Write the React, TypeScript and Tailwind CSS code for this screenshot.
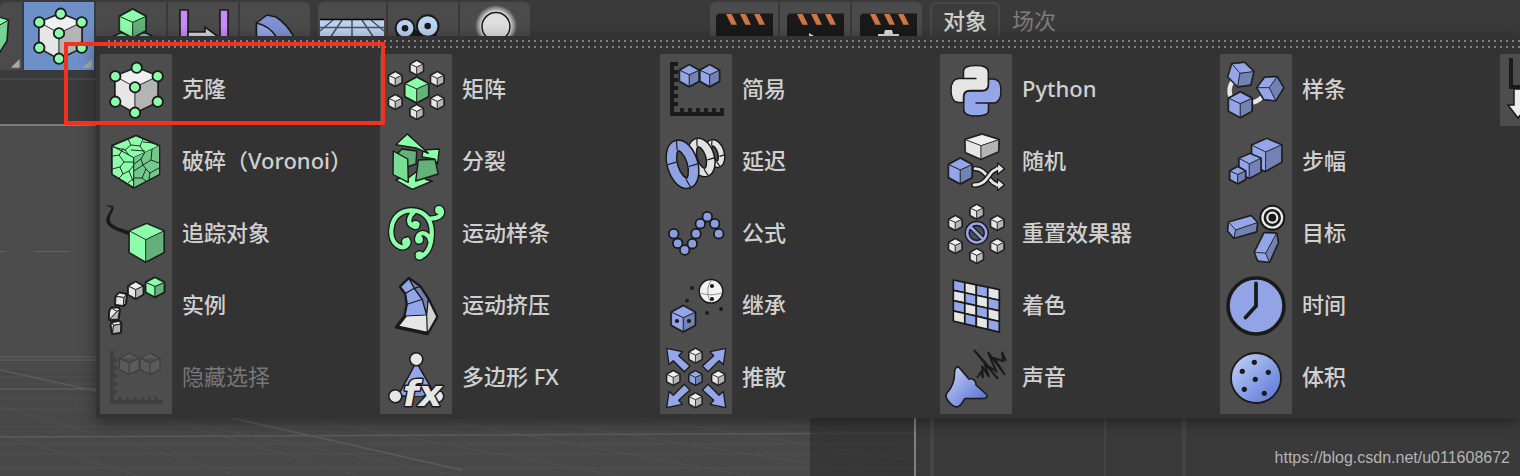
import type { ReactNode } from "react";
import { clsx } from "clsx";

type Point = [number, number];
type Tone = "white" | "green" | "blue";

const INK = "#1a1a1a";

const TONES: Record<Tone, { top: string; left: string; right: string }> = {
  white: { top: "#f0f0f0", left: "#e6e6e6", right: "#b4b4b4" },
  green: { top: "#8cffaa", left: "#8cffaa", right: "#62b27a" },
  blue: { top: "#94a6e8", left: "#94a6e8", right: "#7382b4" },
};

const join = (pts: Point[]) => pts.map((p) => p.join(",")).join(" ");

// Corners run clockwise from the top, the inner corner comes last.
function Box({ pts, tone = "blue", line = 1.6 }: { pts: Point[]; tone?: Tone; line?: number }) {
  const [top, right, rightLow, bottom, leftLow, left, mid] = pts;
  const c = TONES[tone];
  return (
    <g strokeLinejoin="round">
      <polygon points={join([top, right, rightLow, bottom, leftLow, left])} fill={c.left} stroke={INK} strokeWidth={line * 2} />
      <g stroke={INK} strokeWidth={line * 0.6}>
        <polygon points={join([top, right, mid, left])} fill={c.top} />
        <polygon points={join([left, mid, bottom, leftLow])} fill={c.left} />
        <polygon points={join([mid, right, rightLow, bottom])} fill={c.right} />
      </g>
    </g>
  );
}

function Cube({ x, y, w, h, tone = "white", line = 1.3 }: { x: number; y: number; w: number; h: number; tone?: Tone; line?: number }) {
  const d = h / 2;
  return (
    <Box
      tone={tone}
      line={line}
      pts={[[x, y - h], [x + w, y - d], [x + w, y + d], [x, y + h], [x - w, y + d], [x - w, y - d], [x, y - h * 0.08]]}
    />
  );
}

function Dots({ at, r, fill = INK }: { at: Point[]; r: number; fill?: string }) {
  return (
    <>
      {at.map(([x, y]) => (
        <circle key={`${x}-${y}`} cx={x} cy={y} r={r} fill={fill} />
      ))}
    </>
  );
}

function Outlined({ d, color, width }: { d: string; color: string; width: number }) {
  return (
    <g fill="none" strokeLinecap="round" strokeLinejoin="round">
      <path d={d} stroke={INK} strokeWidth={width + 2.8} />
      <path d={d} stroke={color} strokeWidth={width} />
    </g>
  );
}

const CLONER_POINTS: Point[] = [[36.7, 13.7], [15.3, 22.3], [57.7, 22.3], [35, 33.3], [15.3, 47.7], [57.7, 47.7], [35, 58.7]];

const cloner = (
  <>
    <Box tone="white" pts={[[36.7, 13.7], [57.7, 22.3], [57.7, 47.7], [35, 58.7], [15.3, 47.7], [15.3, 22.3], [35, 33.3]]} line={1.2} />
    {CLONER_POINTS.map(([x, y]) => (
      <circle key={`${x}-${y}`} cx={x} cy={y} r="5.2" fill="#8cffaa" stroke={INK} strokeWidth="1.8" />
    ))}
  </>
);

const fracture = (
  <>
    <Box tone="green" pts={[[36, 10], [59, 20], [59, 48], [33.7, 61.3], [12.3, 48], [12.3, 20], [33.7, 31.7]]} line={1.3} />
    <polygon points="33.7,31.7 59,20 59,48 33.7,61.3" fill="#72c98c" />
    <path
      d="M33.7 31.7V61M28 13l3 6-6 5-12-3M31 19l9 1 3-7M25 24l4 5M40 20l4 6M43 16l10 1M31 24l14 1M12.3 30l7-1 4-7M19 29l5 7 10 0M24 36l-4 5-8 2M20 41l3 7 6-3 5-6M23 48l-4 4M29 45l4 10M28 57l5-4M34 38l7-5 4-7M41 33l2 6-9 6M43 39l8-5 1-11M51 34l8 3M46 43l4 4 9-5M43 39l3 4-4 9-8 0M50 47l-1 6M42 52l4 3"
      fill="none"
      stroke={INK}
      strokeWidth="0.9"
    />
  </>
);

const tracer = (
  <>
    <path d="M7.3 7.2L12.7 7.8Q14.5 9.5 12.4 13.5C10 18.5 8.5 22 11.5 25.5C16 29.5 22 30.5 30 33.5L29 37.5C20 33.5 13 32 8.5 27.5C4.5 22.5 6.5 18.5 9.5 14Q12.5 9.5 10.5 9L7.3 8.4Z" fill={INK} />
    <Box tone="green" pts={[[46.7, 25.8], [63.8, 33], [63.8, 54.3], [45.7, 63.8], [29.5, 54.3], [29.5, 33], [45.7, 41.7]]} line={1.2} />
  </>
);

const instance = (
  <>
    <Box tone="white" pts={[[19.5, 51.5], [20.8, 54], [20.5, 62.5], [12.5, 63.5], [11, 55], [12, 52.5], [13.5, 55.5]]} line={1.5} />
    <Box tone="white" pts={[[18.3, 38], [19.5, 40], [18, 49.3], [9.5, 49.5], [9.5, 42], [11.5, 38], [17, 41.5]]} line={1.5} />
    <Box tone="white" pts={[[19.5, 23], [26.5, 24.5], [25.5, 33.5], [23.5, 35.5], [15.5, 34.5], [16, 26.5], [24, 27.5]]} line={1.5} />
    <Cube x={35.7} y={20.3} w={7.3} h={8.2} line={1.4} />
    <Cube x={55} y={17.3} w={9} h={9.5} tone="green" line={1.4} />
  </>
);

const plainEffector = (
  <>
    <path
      d="M10 8h8v4h-4v4h4v4h-4v4h4v4h-4v4h4v4h-4v4h4v4h-4v4h4v4h-4v6h6v-4h4v4h4v-4h4v4h4v-4h4v4h4v-4h4v4h4v-4h4v4h4v-4h4v8H10z"
      fill={INK}
    />
    <Cube x={29.3} y={21.7} w={9.5} h={10.6} tone="blue" />
    <Cube x={49.7} y={21.7} w={9.5} h={10.6} tone="blue" />
  </>
);

const hideSelected = (
  <g fill="#5b5b5b" stroke="#404040" strokeWidth="1.4" strokeLinejoin="round">
    <path
      d="M10 9h4v7h3v4h-3v4h3v4h-3v4h3v4h-3v4h3v4h-3v4h3v4h-3v6h4v-3h4v3h4v-3h3v3h4v-3h4v3h4v-3h3v3h4v-3h3v3h4v-3h3v3h5v4H10z"
      fill="#404040"
      stroke="none"
    />
    <path d="M29.3 11l10 5.3v11L29.3 32.6l-10-5.3v-11zM19.3 16.3l10 4.5 10-4.5M29.3 20.8v11.8" />
    <path d="M50 11l10 5.3v11L50 32.6l-10-5.3v-11zM40 16.3l10 4.5 10-4.5M50 20.8v11.8" />
  </g>
);

const ring: Point[] = [[36.7, 13.7], [15.3, 25], [57.3, 25], [15.3, 48], [57.3, 48], [36.7, 58]];

const ringCubes = ring.map(([x, y]) => <Cube key={`${x}-${y}`} x={x} y={y} w={6.4} h={7} line={1.2} />);

const matrix = (
  <>
    {ringCubes}
    <Cube x={36.7} y={36} w={11.6} h={12.5} tone="green" />
  </>
);

const split = (
  <g stroke={INK} strokeWidth="1.4" strokeLinejoin="round">
    <polygon points="15.7,54 32.3,63.3 52.3,55 46,53.5 36,46 27,53 20,52" fill="#8cffaa" />
    <polygon points="18,27 22,23 36.7,25 36,38 27,41" fill="#62b27a" />
    <polygon points="43,24 59.3,23 57.5,38 54,33 42,31" fill="#8cffaa" />
    <polygon points="13.3,25 27.7,33 28.3,56.3 13,48.5" fill="#78de94" />
    <polygon points="38.3,34 55,33.3 58.3,48 35.7,55" fill="#62b27a" />
    <polygon points="27.3,8 15.7,18.7 36,22 48.3,27.3" fill="#8cffaa" />
  </g>
);

const SWIRL =
  "M27.5 41.5c3 5-3 9.500-8 7-7-3-9-11-8-18C12.500 20 20 12.500 31 12.300c13-.3 20.800 8.700 20.800 22.200 0 12-3.800 22.500-12.300 24.500M49 20.500c8 .5 13.500-2.500 13-7.500-.3-2-2-2.500-3-2M34 14c-6 5-6.500 12-1 14 2 .6 4-.5 4.500-2M50.500 45c.5-6-5-11-9.500-9.500-4 1.500-4 5.500-2 7.500";
const SWIRL_ENDS: Point[] = [[26, 44], [35.5, 27], [39, 41.5], [39.5, 57.5], [59, 12]];

const motionSpline = (
  <>
    <path d={SWIRL} fill="none" stroke={INK} strokeWidth="7" strokeLinecap="round" />
    <Dots at={SWIRL_ENDS} r={5.4} />
    <path d={SWIRL} fill="none" stroke="#8cffaa" strokeWidth="4.2" strokeLinecap="round" />
    <Dots at={SWIRL_ENDS} r={3.9} fill="#8cffaa" />
  </>
);

const moExtrude = (
  <g stroke={INK} strokeWidth="1.2" strokeLinejoin="round">
    <path d="M29 8.500L20.500 16.700l5.200 6.600 1.600 11L25 46l-8.500 11L47.300 63.500l9.500-16.800-8.500-17.400L40 16.700z" fill="#e6e6e6" strokeWidth="3.4" />
    <path d="M29 8.500L20.500 16.700l5.200 6.600 1.600 11L25 46l21.700-1-4.400-15.700-8-11z" fill="#94a6e8" />
    <path d="M29 8.500l5.300 9.800 8 11L46.700 45l1.600-15.700L40 16.700z" fill="#7382b4" />
    <path d="M46.700 45l1.600-15.700 8.500 17.400L47.300 63.500z" fill="#d2d2d2" />
    <path d="M25.700 23.300l8.600-5M27.300 34.300l15-5M40 16.700l-5.700 1.600" fill="none" />
  </g>
);

const polyFx = (
  <>
    <path d="M36.300 20L18 54h38z" fill="#94a6e8" stroke={INK} strokeWidth="1.5" />
    <path d="M35 36l-9 18h17z" fill="#7d92dc" />
    <g fill="#e6e6e6" stroke={INK} strokeWidth="1.500">
      <circle cx="36.300" cy="17.300" r="6.500" />
      <circle cx="15.300" cy="54.300" r="6.500" />
      <circle cx="57.700" cy="54.300" r="6" />
    </g>
    <text
      x="23"
      y="63.500"
      fontFamily="DejaVu Sans, sans-serif"
      fontSize="36"
      fontWeight="bold"
      fontStyle="italic"
      fill="#e6e6e6"
      stroke={INK}
      strokeWidth="3"
      strokeLinejoin="round"
      paintOrder="stroke"
    >
      fx
    </text>
  </>
);

function Torus({ x, y, rx, ry, width, fill }: { x: number; y: number; rx: number; ry: number; width: number; fill: string }) {
  return (
    <g transform={`rotate(-17 ${x} ${y})`} fill="none">
      <ellipse cx={x} cy={y} rx={rx} ry={ry} stroke={INK} strokeWidth={width + 3} />
      <ellipse cx={x} cy={y} rx={rx} ry={ry} stroke={fill} strokeWidth={width} />
      <path
        d={`M${x - rx - width / 2} ${y - 4}h${width}M${x + rx - width / 2} ${y + 4}h${width}M${x + 1} ${y - ry - width / 2}l-2 ${width}M${x - 1} ${y + ry - width / 2}l2 ${width}`}
        stroke={INK}
        strokeWidth="1.2"
      />
    </g>
  );
}

const delay = (
  <>
    <Torus x={55} y={27.500} rx={6} ry={11} width={5} fill="#e2e2e2" />
    <Torus x={41.500} y={31.500} rx={8.500} ry={15.500} width={7} fill="#e2e2e2" />
    <Torus x={22.500} y={38.300} rx={10} ry={19.500} width={9} fill="#8fa2e4" />
  </>
);

const formula = (
  <g fill="#8a9de0" stroke={INK} strokeWidth="1.8">
    {[[13.7, 35.7], [17.7, 45.3], [24.7, 52], [32.3, 45.7], [36, 35.7], [40.3, 25.7], [47.3, 18.7], [54.7, 25.7], [58.7, 35.7]].map(([x, y]) => (
      <circle key={x} cx={x} cy={y} r="4.800" />
    ))}
  </g>
);

const inherit = (
  <>
    <circle cx="51" cy="21.300" r="11.800" fill="#f2f2f2" stroke={INK} strokeWidth="1.500" />
    <path d="M39.500 22.500c6 3 16 3 23 0M51.500 10c-5 6-5 17 0 23" fill="none" stroke="#777" strokeWidth="0.8" />
    <Cube x={23.300} y={48.700} w={11.700} h={12.700} tone="blue" />
    <Dots at={[[52, 16], [52, 29], [17, 51], [29, 51]]} r={2.1} />
    <Dots at={[[32, 18], [27, 30.7], [47, 43], [61, 39]]} r={1.9} />
  </>
);

const ARROW = "6.7,6.3 22.3,9.7 18.7,13.7 30,24 24.3,29.7 13.3,18.7 9,22.5";
const push = (
  <>
    <g fill="#94a6e8" stroke={INK} strokeWidth="1.3" strokeLinejoin="round">
      <polygon points={ARROW} />
      <polygon points={ARROW} transform="matrix(-1 0 0 1 72.4 0)" />
      <polygon points={ARROW} transform="matrix(1 0 0 -1 0 72)" />
      <polygon points={ARROW} transform="matrix(-1 0 0 -1 72.4 72)" />
    </g>
    <Cube x={35.500} y={13.700} w={6.300} h={7} line={1.100} />
    <Cube x={13.300} y={36} w={6.300} h={7} line={1.100} />
    <Cube x={58.300} y={36} w={6.300} h={7} line={1.100} />
    <Cube x={35.500} y={36} w={6.300} h={7} tone="blue" line={1.100} />
    <Cube x={35.500} y={58.300} w={6.300} h={7} line={1.100} />
  </>
);

const SNAKE =
  "M36 24.500H23.500V17c0-4 5.500-5.500 12.500-5.500s12.300 2 12.300 6.500v12c0 4-2.300 6.500-6.300 6.500H30c-4 0-6.500 2.500-6.500 6.500v5.500H19c-5.500 0-8-5.500-8-12s2.500-12 8-12h4.500";
const python = (
  <g stroke={INK} strokeWidth="1.500" strokeLinecap="round">
    <path d={SNAKE} fill="#94a6e8" transform="rotate(180 36 36.800)" />
    <path d={SNAKE} fill="#e6e6e6" />
  </g>
);

const random = (
  <>
    <Box tone="white" pts={[[42, 8.5], [58.7, 13.7], [58.3, 25.5], [41, 33], [25.7, 26.3], [25.3, 13.7], [41, 19.700]]} line={1.2} />
    <Outlined d="M35 42.700c13 0 13 16.300 25 16.300" color="#e6e6e6" width={2.800} />
    <Outlined d="M34 59c16 0 13-16.300 26-16.300" color="#e6e6e6" width={2.800} />
    <g fill="#e6e6e6" stroke={INK} strokeWidth="1.300" strokeLinejoin="round">
      <path d="M57.500 37l7 5.700-7 5.800z" />
      <path d="M57.500 53l7 5.700-7 5.800z" />
    </g>
    <path d="M56 42.700h4M56 59h4" stroke="#e6e6e6" strokeWidth="2.800" />
    <Cube x={20.300} y={45} w={11.500} h={12.500} tone="blue" />
  </>
);

const resetEffector = (
  <>
    {ringCubes}
    <Outlined d="M27.200 35a9.500 9.500 0 1 0 19 0a9.500 9.500 0 1 0 -19 0M30.200 28.500l13 13" color="#94a6e8" width={2.500} />
  </>
);

const CELLS = [0, 1, 2, 3];
const shader = (
  <g stroke={INK} strokeWidth="1.700" strokeLinejoin="round">
    {CELLS.flatMap((row) =>
      CELLS.map((col) => {
        const at = (c: number, r: number): Point => [13.3 + c * 11.5, 10 + c * 2.4 + r * 10.3 + c * r * 0.08];
        return (
          <polygon
            key={`${row}-${col}`}
            points={join([at(col, row), at(col + 1, row), at(col + 1, row + 1), at(col, row + 1)])}
            fill={(row + col) % 2 ? "#e6e6e6" : "#94a6e8"}
          />
        );
      })
    )}
  </g>
);

const sound = (
  <>
    <defs>
      <linearGradient id="horn" x1="0" y1="0" x2="1" y2="1">
        <stop offset="0" stopColor="#cdd6f8" />
        <stop offset="1" stopColor="#4c66cf" />
      </linearGradient>
    </defs>
    <path
      d="M17 25c-2 1-2.500 4-2.500 7 0 8-2 13-7.500 19-2 2.500-.5 6 2 9 3 3.500 7 5.500 9.500 4.500 3-1.500 4-5 6.500-8H44c3 0 4-2.500 2-4.500L36 43c.5-4-3-7-7-6L19.500 26C18.700 25 18 24.700 17 25z"
      fill="url(#horn)"
      stroke={INK}
      strokeWidth="1.600"
    />
    <path
      d="M37 36l4-6 2 6-1-12 7 11-5-15 14 17L34 8l14 16 8 5-8-19 17 23-11-17 9 3-1-9 4 9"
      fill="none"
      stroke={INK}
      strokeWidth="2"
    />
  </>
);

const spline = (
  <>
    <path d="M12.500 27.500c-3.500 5-4 9-2 15M33 48.500q4-1 9-5" fill="none" stroke="#e6e6e6" strokeWidth="4.500" />
    <Box pts={[[24.3, 8.7], [33.500, 17.7], [30.5, 30.700], [17.7, 32.5], [8.2, 22.7], [12, 10], [20, 19.3]]} line={1.2} />
    <Box pts={[[45, 23.5], [57, 23], [63.300, 33.7], [55.7, 46.500], [44, 45.300], [37.2, 33.7], [49.3, 33.7]]} line={1.2} />
    <Cube x={20.300} y={50.700} w={11.500} h={12.500} tone="blue" />
  </>
);

const step = (
  <>
    <Box pts={[[46.7, 12.8], [61.500, 19], [61.500, 36], [45.500, 45], [32, 40], [32, 19.300], [45.7, 26]]} line={1.200} />
    <Box pts={[[30, 27.8], [40.700, 32.3], [40.700, 46], [29.3, 52], [19.300, 47], [19.300, 32.5], [29.3, 38]]} line={1.200} />
    <Cube x={17.700} y={49.200} w={7.600} h={8.200} tone="blue" />
  </>
);

const target = (
  <>
    <circle cx="52.300" cy="19.700" r="13" fill={INK} />
    <circle cx="52.300" cy="19.700" r="9.800" fill="none" stroke="#ececec" strokeWidth="2.200" />
    <circle cx="52.300" cy="19.700" r="5" fill="none" stroke="#ececec" strokeWidth="2.200" />
    <Box pts={[[31, 18], [37.300, 24.7], [36.300, 33.500], [14, 39.900], [8, 32.7], [8.7, 24.3], [15.7, 32]]} line={1.2} />
    <Box pts={[[44.3, 35], [56.500, 35.5], [58, 44.7], [49.3, 63.900], [38, 62.700], [34.700, 54.3], [45.7, 55.3]]} line={1.2} />
  </>
);

const time = (
  <>
    <circle cx="36" cy="36" r="28" fill="#92a4e6" stroke={INK} strokeWidth="3.600" />
    <path d="M36 13.500V36L25.500 47.500" fill="none" stroke={INK} strokeWidth="3.800" strokeLinecap="round" strokeLinejoin="round" />
  </>
);

const volume = (
  <>
    <defs>
      <linearGradient id="ball" x1="0" y1="0" x2="1" y2="1">
        <stop offset="0.1" stopColor="#bccaf2" />
        <stop offset="0.9" stopColor="#5f7ddb" />
      </linearGradient>
    </defs>
    <circle cx="36" cy="36" r="25" fill="url(#ball)" stroke={INK} strokeWidth="1.800" />
    <Dots at={[[34.3, 20.3], [22.3, 29.3], [48.3, 30.3], [35.3, 37.3], [24.3, 47.3], [44.3, 51.3]]} r={2.600} />
  </>
);

const groupEffector = (
  <>
    <path d="M11 4v29h20" fill="none" stroke={INK} strokeWidth="4" />
    <path d="M14 35v16H8l10 13 10-13h-6V35z" fill="#ececec" stroke={INK} strokeWidth="1.500" />
  </>
);

type Entry = { label: string; icon: ReactNode; disabled?: boolean };

const MENU: Entry[] = [
  { label: "克隆", icon: cloner },
  { label: "破碎（Voronoi）", icon: fracture },
  { label: "追踪对象", icon: tracer },
  { label: "实例", icon: instance },
  { label: "隐藏选择", icon: hideSelected, disabled: true },
  { label: "矩阵", icon: matrix },
  { label: "分裂", icon: split },
  { label: "运动样条", icon: motionSpline },
  { label: "运动挤压", icon: moExtrude },
  { label: "多边形 FX", icon: polyFx },
  { label: "简易", icon: plainEffector },
  { label: "延迟", icon: delay },
  { label: "公式", icon: formula },
  { label: "继承", icon: inherit },
  { label: "推散", icon: push },
  { label: "Python", icon: python },
  { label: "随机", icon: random },
  { label: "重置效果器", icon: resetEffector },
  { label: "着色", icon: shader },
  { label: "声音", icon: sound },
  { label: "样条", icon: spline },
  { label: "步幅", icon: step },
  { label: "目标", icon: target },
  { label: "时间", icon: time },
  { label: "体积", icon: volume },
  { label: "", icon: groupEffector },
];

function MenuItem({ label, icon, disabled }: Entry) {
  return (
    <li>
      <button
        disabled={disabled}
        className={clsx(
          "flex w-full items-center gap-2.5 text-left text-[22px] leading-8",
          disabled ? "text-[#777777]" : "font-medium text-[#d0d0d0]"
        )}
      >
        <svg viewBox="0 0 72 72" className="size-18 shrink-0 bg-[#4d4d4d]" aria-hidden="true">
          {icon}
        </svg>
        <span className="pb-1 whitespace-nowrap">{label}</span>
      </button>
    </li>
  );
}

const fold = <path d="M67.700 59v8.700H58.700z" fill="#a8a8a8" />;

function Clapper({ x, children }: { x: number; children?: ReactNode }) {
  return (
    <>
      <path d={`M${x} 60V17.500q0-4 4-4h53V60z`} fill={INK} />
      {[0, 14, 28].map((dx) => (
        <path key={dx} d={`M${x + 10 + dx} 14h5.700l5.300 10.700h-5.700z`} fill="#cc7846" />
      ))}
      {children}
    </>
  );
}

type Tool = { name: string; view: string; className: string; icon: ReactNode };

const MODELING: Tool[] = [
  {
    name: "生成器",
    view: "48 2 22 68",
    className: "w-[22px] bg-[#4b4b4b]",
    icon: (
      <>
        <path d="M46 17l10.500 3-1.500 21-9 14z" fill="#72d490" stroke={INK} strokeWidth="1.600" />
        <path d="M46 17l10.500 3L46 26z" fill="#8cffaa" stroke={INK} />
        {fold}
      </>
    ),
  },
  {
    name: "运动图形",
    view: "0 2 70 68",
    className: "w-[70px] bg-[#6e90c8]",
    icon: (
      <>
        {cloner}
        {fold}
      </>
    ),
  },
  {
    name: "细分",
    view: "0 2 70 68",
    className: "w-[70px] bg-[#4b4b4b]",
    icon: (
      <>
        <path d="M14 38l10-5h26l10 5z" fill="#72d490" stroke={INK} strokeWidth="1.500" />
        <Cube x={36.700} y={23.500} w={13} h={14} tone="green" />
      </>
    ),
  },
  {
    name: "变形器",
    view: "0 2 70 68",
    className: "w-[70px] bg-[#4b4b4b]",
    icon: (
      <g stroke={INK} strokeWidth="1.600">
        <path d="M12 10h8v40h-8zM52 10h8v40h-8z" fill="#c78cf8" />
        <path d="M20 32h17v-5l15 11-15 11v-5H20z" fill="#d8d8d8" />
      </g>
    ),
  },
  {
    name: "弯曲",
    view: "0 2 70 68",
    className: "w-[70px] bg-[#4b4b4b]",
    icon: (
      <g stroke={INK} strokeWidth="1.500">
        <path d="M16.500 50V23l10.500-8 9 2c8 5 13 11 18 20v13z" fill="#7f92d2" />
        <path d="M16.500 23c9 2 15 6 20 14v13h-20z" fill="#94a6e8" />
      </g>
    ),
  },
];

const SCENE: Tool[] = [
  {
    name: "地面",
    view: "2 2 68 68",
    className: "w-[68px] bg-[#4b4b4b]",
    icon: (
      <>
        <path d="M4 19h64v30H4z" fill="#bcd4f4" />
        <path d="M36 20v20M26 20L14 38M46 20l12 18M17 20L4 31M55 20l13 11M4 27.500h64" fill="none" stroke="#4a525c" strokeWidth="1.500" />
        <path d="M4 19.500h64" stroke="#000" strokeWidth="1.500" />
      </>
    ),
  },
  {
    name: "摄像机",
    view: "0 2 70 68",
    className: "w-[70px] bg-[#4b4b4b]",
    icon: (
      <>
        <path d="M8 38l1-8h40v8z" fill={INK} />
        <circle cx="17" cy="28.300" r="9.400" fill="#bcd4f4" stroke={INK} strokeWidth="2" />
        <circle cx="39.700" cy="26" r="10.800" fill="#bcd4f4" stroke={INK} strokeWidth="2" />
        <Dots at={[[17, 28.3], [39.7, 26]]} r={3.300} />
      </>
    ),
  },
  {
    name: "灯光",
    view: "0 2 70 68",
    className: "w-[70px] bg-[#4b4b4b]",
    icon: (
      <>
        <defs>
          <radialGradient id="glow">
            <stop offset="0.6" stopColor="#fff" />
            <stop offset="1" stopColor="#fff" stopOpacity="0" />
          </radialGradient>
        </defs>
        <circle cx="36" cy="26" r="21" fill="url(#glow)" />
        <circle cx="36" cy="26.500" r="14" fill="#dedede" stroke={INK} strokeWidth="1.500" />
      </>
    ),
  },
];

const RENDER: Tool[] = [
  { name: "渲染视图", view: "2 2 68 68", className: "w-[68px] bg-[#4b4b4b]", icon: <Clapper x={8} /> },
  {
    name: "渲染到图片查看器",
    view: "0 2 70 68",
    className: "w-[70px] bg-[#4b4b4b]",
    icon: (
      <Clapper x={7}>
        <path d="M29 33l14 8-14 8z" fill="#e0e0e0" />
      </Clapper>
    ),
  },
  {
    name: "渲染设置",
    view: "0 2 70 68",
    className: "w-[70px] bg-[#4b4b4b]",
    icon: (
      <Clapper x={8}>
        <path d="M33 30h7l1 4h6v8H26v-8h6z" fill="#e0e0e0" />
      </Clapper>
    ),
  },
];

function ToolGroup({ tools }: { tools: Tool[] }) {
  return (
    <div className="flex shrink-0 gap-0.5 overflow-hidden rounded-t-md">
      {tools.map((tool) => (
        <button key={tool.name} aria-label={tool.name} className={clsx("h-17", tool.className)}>
          <svg viewBox={tool.view} className="size-full" aria-hidden="true">
            {tool.icon}
          </svg>
        </button>
      ))}
    </div>
  );
}

function Viewport() {
  return (
    <svg viewBox="0 0 914 350" preserveAspectRatio="none" className="h-[350px] w-full flex-1 bg-[#4c4c4c]" aria-hidden="true">
      <path d="M0 230h914v120H0z" fill="#484848" />
      <g fill="none" stroke="#505050">
        <path d="M0 237h914M0 243h914M0 251h914M0 258h914M0 273h914M0 283h914M0 301h914M0 318h914M0 328h914M0 342h914" />
        <path d="M0 280l240 70M0 308l140 42M100 275l260 75M160 292l300 58M300 292l320 58M430 292l320 58M520 292l370 58M640 292l274 43M750 292l164 25" />
      </g>
      <g fill="none" stroke="#5c5c5c" strokeWidth="1.500">
        <path d="M0 231h914M0 234h914M0 263h914M0 311l914-4" />
        <path d="M0 244l96 21M232 292l230 52" />
      </g>
      <path d="M0 125.500h4M35 125.500h33" stroke="#666666" strokeWidth="1" />
      <path d="M810 0h104v350H810z" fill="#262626" fillOpacity="0.5" />
    </svg>
  );
}

export default function App() {
  return (
    <div className="relative flex min-h-screen flex-col overflow-hidden bg-[#3a3a3a] font-['Noto_Sans','Noto_Sans_CJK_SC',sans-serif]">
      <header className="flex h-20 gap-2 border-b-2 border-[#474747] pt-0.5">
        <ToolGroup tools={MODELING} />
        <ToolGroup tools={SCENE} />
        <div className="ml-auto flex">
          <ToolGroup tools={RENDER} />
        </div>
        <nav className="flex w-[590px] shrink-0 items-start text-[22px] leading-8">
          <button className="h-[38px] w-[70px] rounded-t-md border-2 border-[#484848] bg-[#3c3c3c] pb-0.5 font-medium text-[#d0d0d0]">对象</button>
          <button className="h-[38px] px-3 pb-0.5 text-[#7c7c7c]">场次</button>
        </nav>
      </header>

      <div className="flex flex-1">
        <main className="flex min-w-0 flex-1 flex-col">
          <div className="h-[46px] border-b-2 border-[#7a7a7a]" />
          <Viewport />
        </main>
        <aside className="flex w-[606px] shrink-0 flex-col border-l-2 border-[#808080] pl-3.5">
          <div className="flex flex-1 border-l-4 border-[#454545]">
            <div className="w-[172px] border-r-2 border-[#454545]" />
            <div className="w-20 border-r-4 border-[#454545]" />
          </div>
          <footer className="absolute right-2.5 bottom-1.5 font-['Liberation_Sans',sans-serif] text-base leading-6 text-[#b4b4b4]">
            https://blog.csdn.net/u011608672
          </footer>
        </aside>
      </div>

      <div className="absolute top-9 right-0 left-24 overflow-hidden bg-[#333333] pb-1 pl-1 shadow-[0_4px_16px_rgba(0,0,0,0.4)]">
        <div className="flex h-[18px] flex-col gap-1 pt-1 pl-2">
          <div className="h-0.5 bg-[repeating-linear-gradient(90deg,#808080_0_2px,transparent_2px_6px)]" />
          <div className="h-0.5 bg-[repeating-linear-gradient(90deg,#808080_0_2px,transparent_2px_6px)]" />
        </div>
        <ul className="grid auto-cols-[280px] grid-flow-col grid-rows-5">
          {MENU.map((entry, i) => (
            <MenuItem key={i} {...entry} />
          ))}
        </ul>
      </div>

      <div className="pointer-events-none absolute top-[42px] left-16 h-[83px] w-[321px] border-4 border-[#ee3322]" />
    </div>
  );
}
